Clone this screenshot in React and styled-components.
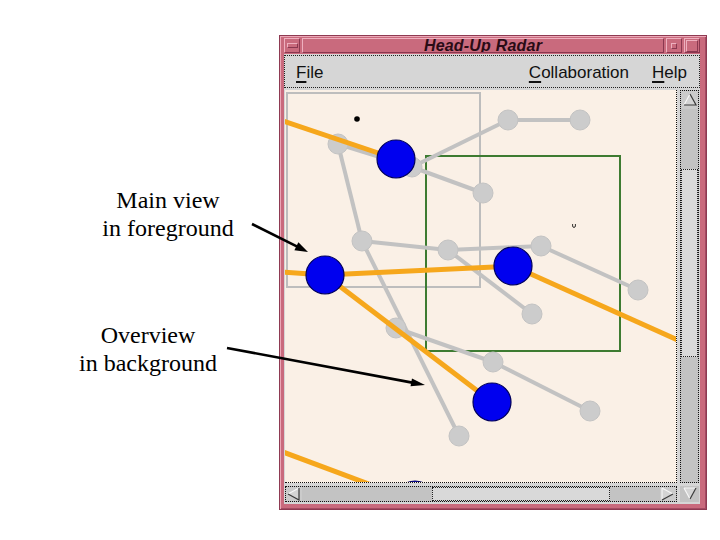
import styled, { createGlobalStyle } from "styled-components";

const GlobalStyle = createGlobalStyle`
  * { box-sizing: border-box; }
  html, body { margin: 0; padding: 0; background: #fff; }
`;

const Page = styled.div`
  position: relative;
  width: 720px;
  height: 540px;
  display: flex;
  background: #fff;
  overflow: hidden;
`;

const Notes = styled.div`
  width: 279px;
  flex: none;
  display: flex;
  flex-direction: column;
`;

const Caption = styled.div`
  width: 170px;
  margin-top: ${({ $top }) => $top}px;
  margin-left: ${({ $cx }) => $cx - 85}px;
  font-family: "Liberation Serif", "Times New Roman", serif;
  font-size: 24px;
  line-height: 28px;
  text-align: center;
  color: #000;
`;

const Window = styled.div`
  margin-top: 35px;
  width: 428px;
  height: 475px;
  flex: none;
  display: flex;
  flex-direction: column;
  padding: 0 6px 5px 4px;
  background: #c96a7d;
  border: 1px solid #8e3a52;
  box-shadow: inset 1px 1px 0 #eba8b7, inset -1px -1px 0 #a44b63;
`;

const TitleBar = styled.div`
  height: 18px;
  display: flex;
  gap: 2px;
  padding: 2px 0 1px;
`;

const bevel = `
  border: 1px solid;
  border-color: #eeb0bf #8a3850 #8a3850 #eeb0bf;
`;

const WinButton = styled.div`
  width: 16px;
  flex: none;
  display: flex;
  align-items: center;
  justify-content: center;
  ${bevel}

  &::after {
    content: "";
    display: block;
    width: ${({ $kind }) => ($kind === "menu" ? 9 : $kind === "min" ? 4 : 10)}px;
    height: ${({ $kind }) => ($kind === "menu" ? 3 : $kind === "min" ? 4 : 10)}px;
    border: 1px solid;
    border-color: #eeb0bf #8a3850 #8a3850 #eeb0bf;
  }
`;

const Title = styled.div`
  flex: 1;
  overflow: hidden;
  text-align: center;
  font-family: "Liberation Sans", Arial, sans-serif;
  font-style: italic;
  font-weight: bold;
  font-size: 16px;
  line-height: 13px;
  letter-spacing: 0.2px;
  color: #2a0b15;
  ${bevel}
`;

const Panel = styled.div`
  flex: 1;
  display: flex;
  flex-direction: column;
  background: #d6d6d6;
`;

const MenuBar = styled.div`
  margin-top: 1px;
  height: 33px;
  display: flex;
  align-items: flex-start;
  gap: 23px;
  padding: 7px 12px 0 11px;
  border: 1px dotted #222;
  font-family: "Liberation Sans", Arial, sans-serif;
  font-size: 17px;
  color: #111;
`;

const MenuItem = styled.span`
  margin-right: ${({ $push }) => ($push ? "auto" : "0")};
`;

const Mnemonic = styled.span`
  text-decoration: underline;
  text-decoration-thickness: 2px;
  text-underline-offset: 3px;
`;

const Body = styled.div`
  flex: 1;
  display: grid;
  grid-template-columns: 392px 19px;
  grid-template-rows: 393px 16px;
  gap: 3px;
  padding: 2px 1px;
`;

const Canvas = styled.div`
  background: #faf0e6;
  border-right: 1px dotted #111;
  border-bottom: 1px dotted #111;
  overflow: hidden;

  svg { display: block; }
`;

const Scroll = styled.div`
  display: flex;
  flex-direction: ${({ $vertical }) => ($vertical ? "column" : "row")};
  background: #c3c3c3;
  border: 1px dotted #111;
`;

const Trough = styled.div`
  flex: ${({ $size }) => ($size ? `0 0 ${$size}px` : 1)};
`;

const Thumb = styled.div`
  flex: 0 0 ${({ $size }) => $size}px;
  background: #d9d9d9;
  border: 1px dotted #222;
`;

const ArrowCell = styled.div`
  flex: 0 0 ${({ $size }) => $size}px;
  display: flex;
  align-items: center;
  justify-content: center;
  background: #cbcbcb;
`;

const Corner = styled.div`
  display: flex;
  align-items: center;
  justify-content: center;
  background: #c3c3c3;
`;

const Overlay = styled.svg`
  position: absolute;
  left: 0;
  top: 0;
  pointer-events: none;
`;

const TRI = {
  up: { light: "M2 13 L8 2", dark: "M8 2 L14 13 L2 13", fill: "2,13 8,2 14,13" },
  down: { light: "M2 2 L14 2 M2 2 L8 13", dark: "M14 2 L8 13", fill: "2,2 14,2 8,13" },
  left: { light: "M2 8 L13 2", dark: "M13 2 L13 14 L2 8", fill: "2,8 13,2 13,14" },
  right: { light: "M2 2 L2 14 M2 2 L13 8", dark: "M13 8 L2 14", fill: "2,2 13,8 2,14" },
};

function ScrollArrow({ dir }) {
  const t = TRI[dir];
  return (
    <svg width="16" height="16" viewBox="0 0 16 16">
      <polygon points={t.fill} fill="#d4d4d4" />
      <path d={t.light} fill="none" stroke="#f6f6f6" strokeWidth="1.2" />
      <path d={t.dark} fill="none" stroke="#3a3a3a" strokeWidth="1.2" />
    </svg>
  );
}

const EDGES = [
  [508, 120, 580, 120],
  [508, 120, 412, 167],
  [338, 144, 412, 167],
  [412, 167, 483, 193],
  [338, 144, 362, 241],
  [362, 241, 448, 250],
  [448, 250, 541, 246],
  [541, 246, 638, 290],
  [448, 250, 532, 314],
  [362, 241, 459, 436],
  [396, 328, 493, 362],
  [493, 362, 590, 411],
];

const LINKS = [
  [283, 121, 396, 159],
  [283, 272, 325, 275],
  [325, 275, 513, 266],
  [513, 266, 680, 341],
  [325, 275, 492, 402],
  [283, 452, 374, 486],
];

const NODES = [
  [338, 144], [508, 120], [580, 120], [412, 167], [483, 193], [362, 241],
  [448, 250], [541, 246], [638, 290], [532, 314], [396, 328], [493, 362],
  [590, 411], [459, 436],
];

const HUBS = [[396, 159], [325, 275], [513, 266], [492, 402], [415, 500]];

function Radar() {
  return (
    <svg width="391" height="392" viewBox="285 90 391 392">
      <rect x="287" y="93" width="193" height="194" fill="none" stroke="#bdbdbd" strokeWidth="2" />
      <rect x="426" y="156" width="194" height="195" fill="none" stroke="#3d7b31" strokeWidth="2" />
      {EDGES.map(([x1, y1, x2, y2], i) => (
        <line key={i} x1={x1} y1={y1} x2={x2} y2={y2} stroke="#c2c2c2" strokeWidth="4" />
      ))}
      {NODES.map(([cx, cy], i) => (
        <circle key={i} cx={cx} cy={cy} r="10" fill="#cccccc" stroke="#c3c3c3" />
      ))}
      {LINKS.map(([x1, y1, x2, y2], i) => (
        <line key={i} x1={x1} y1={y1} x2={x2} y2={y2} stroke="#f6a71c" strokeWidth="5" />
      ))}
      {HUBS.map(([cx, cy], i) => (
        <circle key={i} cx={cx} cy={cy} r="19" fill="#0000ef" stroke="#00005c" strokeWidth="1.2" />
      ))}
      <circle cx="357" cy="119" r="2.8" fill="#000" />
      <path d="M572.6 224 v2 a1.4 1.4 0 0 0 2.8 0 v-2" fill="none" stroke="#000" strokeWidth="0.8" />
    </svg>
  );
}

function Arrow({ x1, y1, x2, y2, head = 13, half = 4.5 }) {
  const len = Math.hypot(x2 - x1, y2 - y1);
  const ux = (x2 - x1) / len;
  const uy = (y2 - y1) / len;
  const bx = x2 - ux * head;
  const by = y2 - uy * head;
  const pts = `${x2},${y2} ${bx - uy * half},${by + ux * half} ${bx + uy * half},${by - ux * half}`;
  return (
    <g>
      <line x1={x1} y1={y1} x2={bx + ux} y2={by + uy} stroke="#000" strokeWidth="2.6" />
      <polygon points={pts} fill="#000" />
    </g>
  );
}

export default function App() {
  return (
    <Page>
      <GlobalStyle />
      <Notes>
        <Caption $top={186} $cx={168}>
          Main view
          <br />
          in foreground
        </Caption>
        <Caption $top={79} $cx={148}>
          Overview
          <br />
          in background
        </Caption>
      </Notes>
      <Window>
        <TitleBar>
          <WinButton $kind="menu" />
          <Title>Head-Up Radar</Title>
          <WinButton $kind="min" />
          <WinButton $kind="max" />
        </TitleBar>
        <Panel>
          <MenuBar>
            <MenuItem $push>
              <Mnemonic>F</Mnemonic>ile
            </MenuItem>
            <MenuItem>
              <Mnemonic>C</Mnemonic>ollaboration
            </MenuItem>
            <MenuItem>
              <Mnemonic>H</Mnemonic>elp
            </MenuItem>
          </MenuBar>
          <Body>
            <Canvas>
              <Radar />
            </Canvas>
            <Scroll $vertical>
              <ArrowCell $size={18}>
                <ScrollArrow dir="up" />
              </ArrowCell>
              <Trough $size={60} />
              <Thumb $size={188} />
              <Trough />
            </Scroll>
            <Scroll>
              <ArrowCell $size={14}>
                <ScrollArrow dir="left" />
              </ArrowCell>
              <Trough $size={130} />
              <Thumb $size={178} />
              <Trough />
              <ArrowCell $size={16}>
                <ScrollArrow dir="right" />
              </ArrowCell>
            </Scroll>
            <Corner>
              <ScrollArrow dir="down" />
            </Corner>
          </Body>
        </Panel>
      </Window>
      <Overlay width="720" height="540" viewBox="0 0 720 540">
        <Arrow x1={252} y1={224} x2={308} y2={252} />
        <Arrow x1={227} y1={348} x2={425} y2={385} head={14} half={4} />
      </Overlay>
    </Page>
  );
}
